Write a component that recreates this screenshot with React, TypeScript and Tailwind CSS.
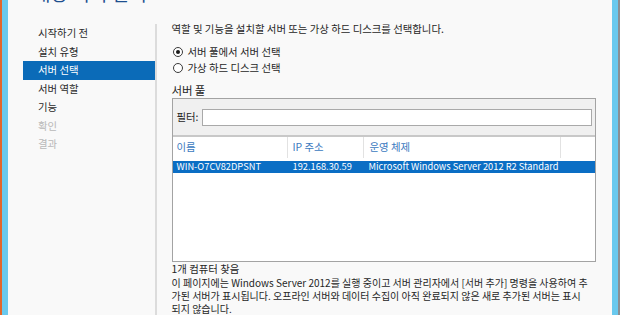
const font = { fontFamily: '"Noto Sans CJK KR", "Liberation Sans", sans-serif' };

const steps = [
  { label: "시작하기 전", state: "normal" },
  { label: "설치 유형", state: "normal" },
  { label: "서버 선택", state: "active" },
  { label: "서버 역할", state: "normal" },
  { label: "기능", state: "normal" },
  { label: "확인", state: "disabled" },
  { label: "결과", state: "disabled" },
];

function Radio({ checked, label }: { checked?: boolean; label: string }) {
  return (
    <div className="flex h-4 items-center gap-[5px]">
      <span className="flex h-[10px] w-[10px] items-center justify-center rounded-full border border-[#3a3a3a] bg-white">
        {checked && <span className="h-[4px] w-[4px] rounded-full bg-[#1a1a1a]" />}
      </span>
      <span>{label}</span>
    </div>
  );
}

export default function App() {
  return (
    <div style={font} className="flex h-[315px] w-[620px] overflow-hidden bg-[#f9f9f9] text-[10.4px] leading-none text-[#262626]">
      <div className="w-[2px] shrink-0 bg-[#e2662c]" />
      <div className="w-[6px] shrink-0 bg-[#69c9ee]" />

      <div className="flex min-w-0 flex-1 flex-col">
        <div className="flex h-[24px] shrink-0 pl-[25px]">
          <div className="-mt-[17px] h-[20px] text-[19px] leading-[20px] text-[#1d4f8f]">대상 서버 선택</div>
        </div>

        <div className="flex min-h-0 flex-1">
          {/* wizard steps */}
          <div className="w-[147px] shrink-0 pl-[15px]">
            {steps.map((s) => (
              <div
                key={s.label}
                className={
                  s.state === "active"
                    ? "flex h-[18.5px] items-center bg-[#0b6bb8] pl-[15px] text-white"
                    : s.state === "disabled"
                    ? "flex h-[18.5px] items-center pl-[15px] text-[#b8b8b8]"
                    : "flex h-[18.5px] items-center pl-[15px] text-[#2a2a2a]"
                }
              >
                {s.label}
              </div>
            ))}
          </div>
          <div className="w-[1.5px] shrink-0 bg-[#dcdcdc]" />

          {/* content */}
          <div className="flex min-w-0 flex-1 flex-col pl-[15px] pr-[15px]">
            <div className="flex h-[11px] shrink-0 items-center">
              역할 및 기능을 설치할 서버 또는 가상 하드 디스크를 선택합니다.
            </div>
            <div className="mt-[9px] flex shrink-0 flex-col pl-[1px]">
              <Radio checked label="서버 풀에서 서버 선택" />
              <Radio label="가상 하드 디스크 선택" />
            </div>
            <div className="mt-[8px] flex h-[14px] shrink-0 items-center text-[11.5px] tracking-[-0.2px]">서버 풀</div>

            <div className="flex h-[164px] w-[424px] shrink-0 flex-col border border-[#a3a3a3] bg-white">
              <div className="flex h-[38px] items-center gap-[3px] border-b-2 border-[#c8c8c8] bg-[#f0f0f0] pl-[4px] pr-[3px]">
                <span>필터:</span>
                <div className="h-[17px] flex-1 border border-[#a9a9a9] bg-white" />
              </div>
              <div className="flex h-[21px] text-[#3b7ac0]">
                <div className="flex w-[115px] items-center border-r border-[#e2e2e2] pl-[4px]">이름</div>
                <div className="flex w-[76px] items-center border-r border-[#e2e2e2] pl-[5px]">IP 주소</div>
                <div className="flex w-[197px] items-center border-r border-[#e2e2e2] pl-[6px]">운영 체제</div>
                <div className="flex-1" />
              </div>
              <div className="mt-[3px] flex h-[12px] items-center bg-[#0b6ec4] text-[9.3px] text-white">
                <div className="w-[115px] pl-[4px]">WIN-O7CV82DPSNT</div>
                <div className="w-[76px] pl-[5px]">192.168.30.59</div>
                <div className="flex-1 pl-[5px]">Microsoft Windows Server 2012 R2 Standard</div>
              </div>
            </div>

            <div className="mt-[1px] flex h-[13px] shrink-0 items-center">1개 컴퓨터 찾음</div>
            <div className="shrink-0 whitespace-nowrap text-[10px] leading-[13px]">
              이 페이지에는 Windows Server 2012를 실행 중이고 서버 관리자에서 [서버 추가] 명령을 사용하여 추
              <br />
              가된 서버가 표시됩니다. 오프라인 서버와 데이터 수집이 아직 완료되지 않은 새로 추가된 서버는 표시
              <br />
              되지 않습니다.
            </div>
          </div>
        </div>
      </div>

      <div className="w-[6px] shrink-0 bg-[#69c9ee]" />
      <div className="w-[2px] shrink-0 bg-[#8a8f94]" />
    </div>
  );
}
